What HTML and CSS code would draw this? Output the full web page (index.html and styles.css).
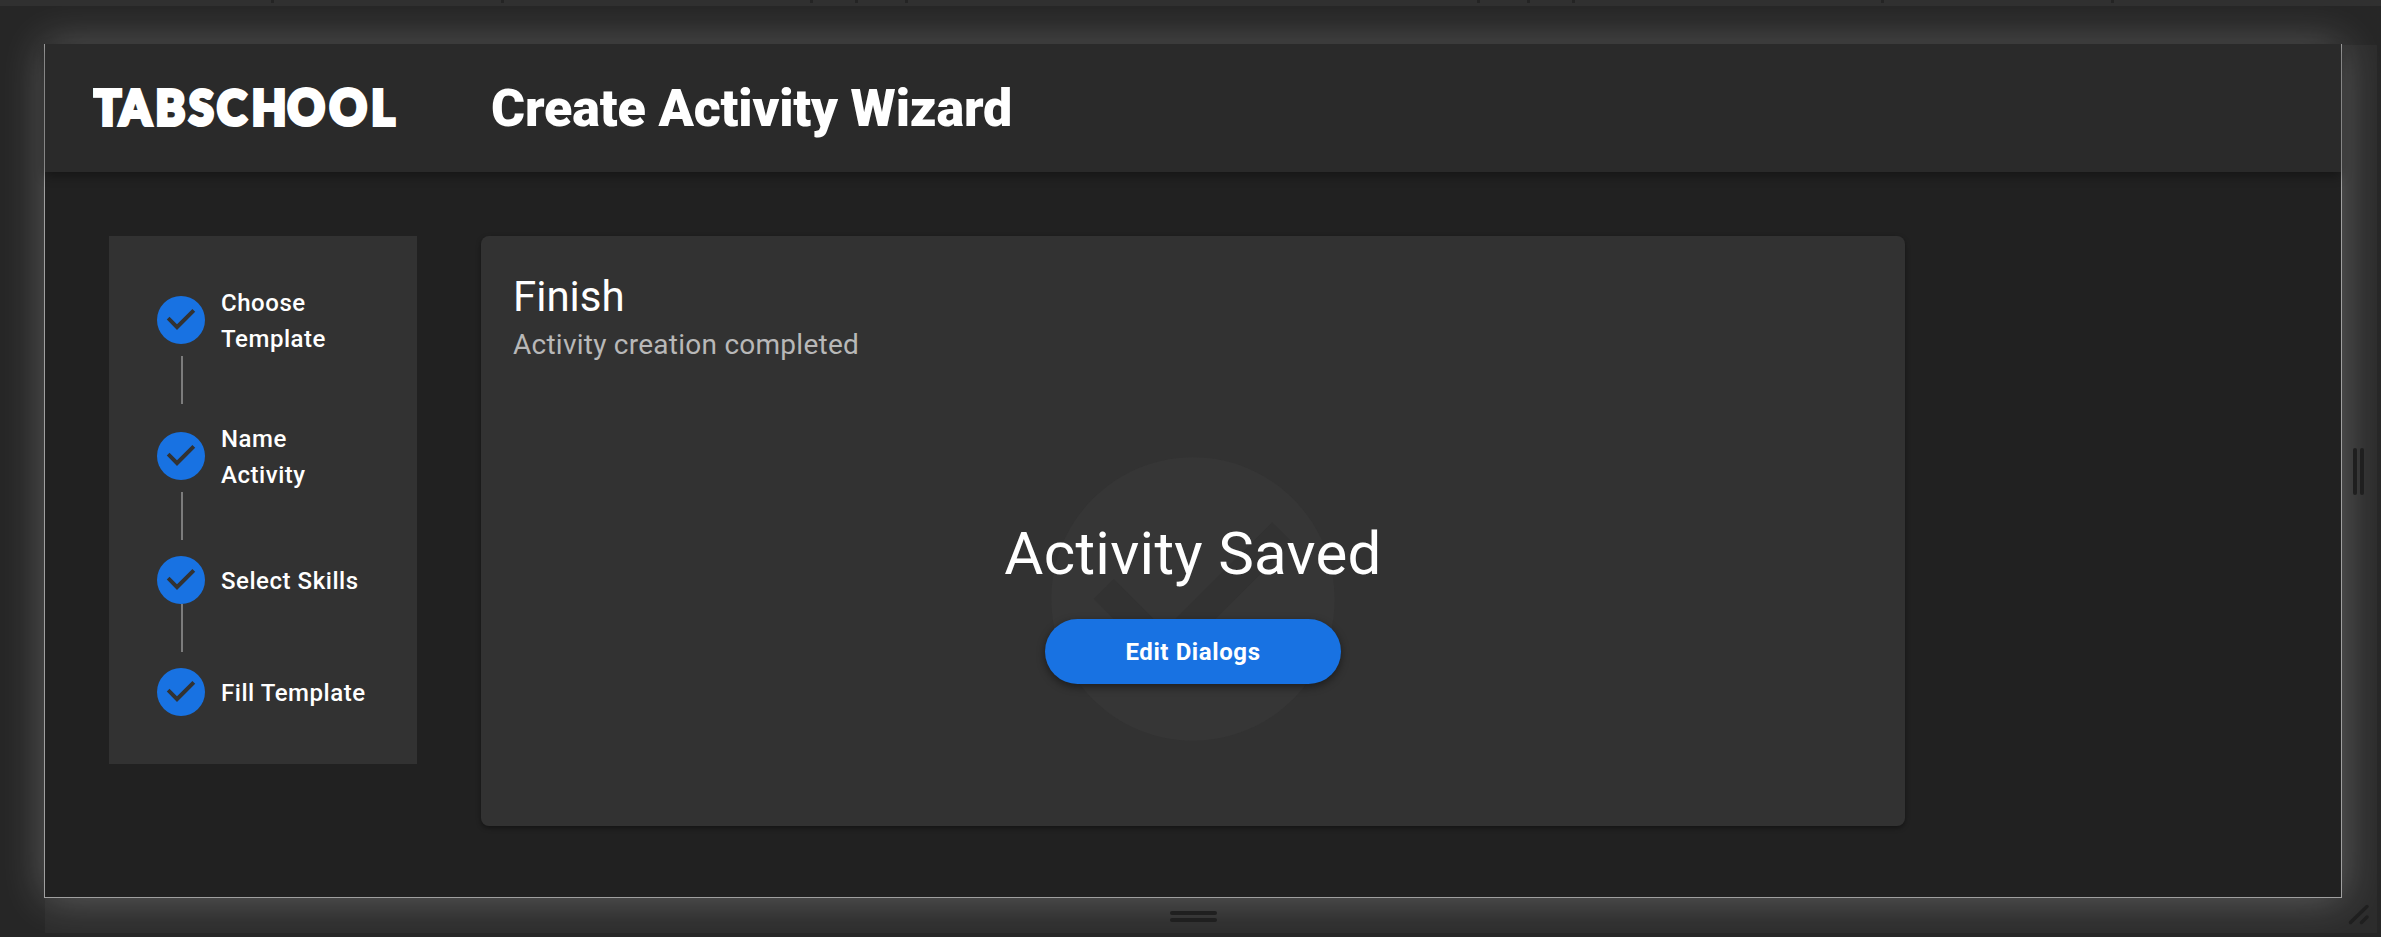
FILE: index.html
```html
<!DOCTYPE html>
<html lang="en">
<head>
<meta charset="utf-8">
<title>Create Activity Wizard</title>
<link rel="stylesheet" href="styles.css">
</head>
<body>
<svg class="defs" width="0" height="0" aria-hidden="true">
  <symbol id="check" viewBox="0 0 48 48"><path d="M9.8 23.4L20 33.9 38.2 15.8 35.4 12.9 20 28.3 12.5 20.8z"/></symbol>
</svg>
<div class="ruler">
  <svg width="2381" height="3"><path d="M271 0h3v3h-3zM501 0h3v3h-3zM810 0h3v3h-3zM855 0h3v3h-3zM905 0h3v3h-3zM1477 0h3v3h-3zM1527 0h3v3h-3zM1572 0h3v3h-3zM1881 0h3v3h-3zM2111 0h3v3h-3z"/></svg>
</div>
<div class="stage">
  <div class="viewport">
    <header class="topbar">
      <div class="logo"><svg width="310" height="64"><g transform="scale(.94 1)"><text x="1 28.5 66.5 102 132 169 207 251.5 296" y="49.5">TABSCH<tspan class="logo-round">OO</tspan>L</text></g></svg></div>
      <h1 class="title">Create Activity Wizard</h1>
    </header>
    <main class="content">
      <nav class="steps">
        <div class="step"><span class="dot"><svg><use href="#check"/></svg></span><span class="label">Choose<br>Template</span></div>
        <i class="connector"></i>
        <div class="step"><span class="dot"><svg><use href="#check"/></svg></span><span class="label">Name<br>Activity</span></div>
        <i class="connector"></i>
        <div class="step"><span class="dot"><svg><use href="#check"/></svg></span><span class="label">Select Skills</span></div>
        <i class="connector"></i>
        <div class="step"><span class="dot"><svg><use href="#check"/></svg></span><span class="label">Fill Template</span></div>
      </nav>
      <section class="card">
        <h2 class="card-title">Finish</h2>
        <p class="card-sub">Activity creation completed</p>
        <div class="saved">
          <svg class="watermark" viewBox="0 0 24 24"><path d="M12 2C6.48 2 2 6.48 2 12s4.48 10 10 10 10-4.48 10-10S17.52 2 12 2zm-2 15l-5-5 1.41-1.41L10 14.17l7.59-7.59L19 8l-9 9z"/></svg>
          <div class="saved-body">
            <div class="saved-text">Activity Saved</div>
            <button class="btn">Edit Dialogs</button>
          </div>
        </div>
      </section>
    </main>
  </div>
  <div class="handle handle-right"><i></i><i></i></div>
  <div class="handle handle-bottom"><i></i><i></i></div>
  <div class="handle handle-corner"><svg width="35" height="35"><path d="M8.5 24.5L25 8.5M19.5 24.5L25 19"/></svg></div>
</div>
</body>
</html>
```

FILE: styles.css
```css
* { box-sizing: border-box; margin: 0; }
body {
  width: 2381px;
  height: 937px;
  overflow: hidden;
  background: #262626;
  color: #fff;
  font-family: Roboto, sans-serif;
}
.defs { position: absolute; }
.ruler { height: 6px; background: #303030; }
.ruler svg { display: block; fill: #242424; }
.stage {
  height: 931px;
  overflow: hidden;
  display: grid;
  grid-template-columns: 2298px 35px;
  grid-template-rows: 854px 35px;
  padding: 38px 0 0 44px;
}
.viewport {
  background: #212121;
  border: solid #a0a0a0;
  border-width: 0 1px 1px;
  box-shadow: 0 0 40px rgba(255, 255, 255, .25);
}
.topbar {
  height: 128px;
  display: flex;
  align-items: center;
  background: #2a2a2a;
  box-shadow: 0 4px 10px rgba(0, 0, 0, .35);
}
.logo { width: 398px; padding-left: 48px; }
.logo svg { display: block; }
.logo text {
  font: 900 47.5px Lato, sans-serif;
  fill: #fff;
  stroke: #fff;
  stroke-width: 4px;
}
.logo .logo-round { font-size: 49px; }
.title {
  padding: 2px 0 0 48px;
  font-size: 52px;
  line-height: 64px;
  font-weight: 900;
  letter-spacing: -.15px;
}
.content { display: flex; align-items: flex-start; gap: 64px; padding: 64px; }
.steps { width: 308px; padding: 48px; background: #323232; }
.step {
  display: flex;
  align-items: center;
  gap: 16px;
  height: 48px;
  font-size: 24px;
  line-height: 36px;
  font-weight: 500;
  letter-spacing: .54px;
  white-space: nowrap;
}
.step:has(br) { height: 72px; }
.label { padding-top: 1px; margin-bottom: -1px; }
.dot { width: 48px; height: 48px; border-radius: 50%; background: #1872e2; }
.dot svg { display: block; width: 48px; height: 48px; fill: #323232; }
.connector { display: block; width: 2px; height: 48px; margin: 0 0 16px 24px; background: #7c7c7c; }
.card {
  width: 1424px;
  height: 590px;
  padding: 33px 32px 32px;
  border-radius: 8px;
  background: #323232;
  box-shadow: 0 2px 5px rgba(0, 0, 0, .4);
}
.card-title { font-size: 42px; line-height: 56px; font-weight: 400; }
.card-sub { font-size: 28px; line-height: 40px; color: #b8b8b8; letter-spacing: .25px; }
.saved { height: 340px; margin-top: 64px; display: grid; justify-items: center; }
.watermark { grid-area: 1 / 1; width: 340px; height: 340px; fill: #363636; }
.saved-body { grid-area: 1 / 1; z-index: 1; padding-top: 85px; text-align: center; }
.saved-text { font-size: 60px; line-height: 80px; letter-spacing: .28px; }
.btn {
  width: 296px;
  height: 65px;
  margin-top: 25px;
  border: 0;
  border-radius: 33px;
  background: #1872e2;
  color: #fff;
  font: 700 24px/36px Roboto, sans-serif;
  letter-spacing: .6px;
  box-shadow: 0 3px 8px rgba(0, 0, 0, .45);
}
.handle { display: flex; align-items: center; justify-content: center; gap: 3px; background: rgba(255, 255, 255, .03); z-index: 1; }
.handle i { background: #1f1f1f; border-radius: 2px; }
.handle-right { margin-top: 1px; padding-right: 2px; }
.handle-right i { width: 4px; height: 47px; }
.handle-bottom { flex-direction: column; margin-left: 1px; padding-top: 2px; }
.handle-bottom i { width: 47px; height: 4px; }
.handle-corner { display: block; }
.handle-corner svg { display: block; fill: none; stroke: #1f1f1f; stroke-width: 3.5; stroke-linecap: round; }
```
